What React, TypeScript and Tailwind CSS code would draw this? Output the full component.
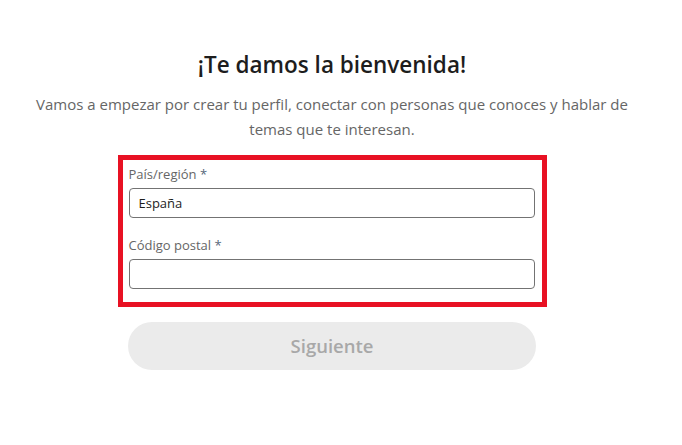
import { useState } from "react";

export default function App() {
  const [country, setCountry] = useState("España");
  const [postal, setPostal] = useState("");

  return (
    <div
      className="min-h-[445px] w-[664px] bg-white flex flex-col items-center pt-[50px]"
      style={{ fontFamily: '"Open Sans", "Noto Sans", sans-serif' }}
    >
      <h1 className="text-[22.5px] leading-[30px] font-semibold text-[#1d1d1d]">
        ¡Te damos la bienvenida!
      </h1>
      <p className="mt-[12px] w-[620px] text-center text-[15px] leading-[25px] text-[#666666]">
        Vamos a empezar por crear tu perfil, conectar con personas que conoces y hablar de temas que te interesan.
      </p>

      {/* bloque destacado */}
      <div className="mt-[13px] w-[429px] h-[152px] border-[5px] border-[#e81123] pl-[6px] pr-[7px] pt-[4px]">
        <label className="block text-[13px] leading-[20px] text-[#666666]">
          País/región <span className="text-[#56687a]">*</span>
        </label>
        <input
          value={country}
          onChange={(e) => setCountry(e.target.value)}
          className="mt-[4px] block w-[406px] h-[30px] rounded-[4px] border border-[#737373] px-[9px] text-[13px] text-[#1d1d1d] outline-none"
        />
        <label className="mt-[17px] block text-[13px] leading-[20px] text-[#666666]">
          Código postal <span className="text-[#56687a]">*</span>
        </label>
        <input
          value={postal}
          onChange={(e) => setPostal(e.target.value)}
          className="mt-[4px] block w-[406px] h-[30px] rounded-[4px] border border-[#737373] px-[9px] text-[13px] text-[#1d1d1d] outline-none"
        />
      </div>

      <button
        disabled
        className="mt-[15px] w-[408px] h-[48px] rounded-full bg-[#ebebeb] text-[18.5px] font-semibold text-[#a8a8a8]"
      >
        Siguiente
      </button>
    </div>
  );
}
